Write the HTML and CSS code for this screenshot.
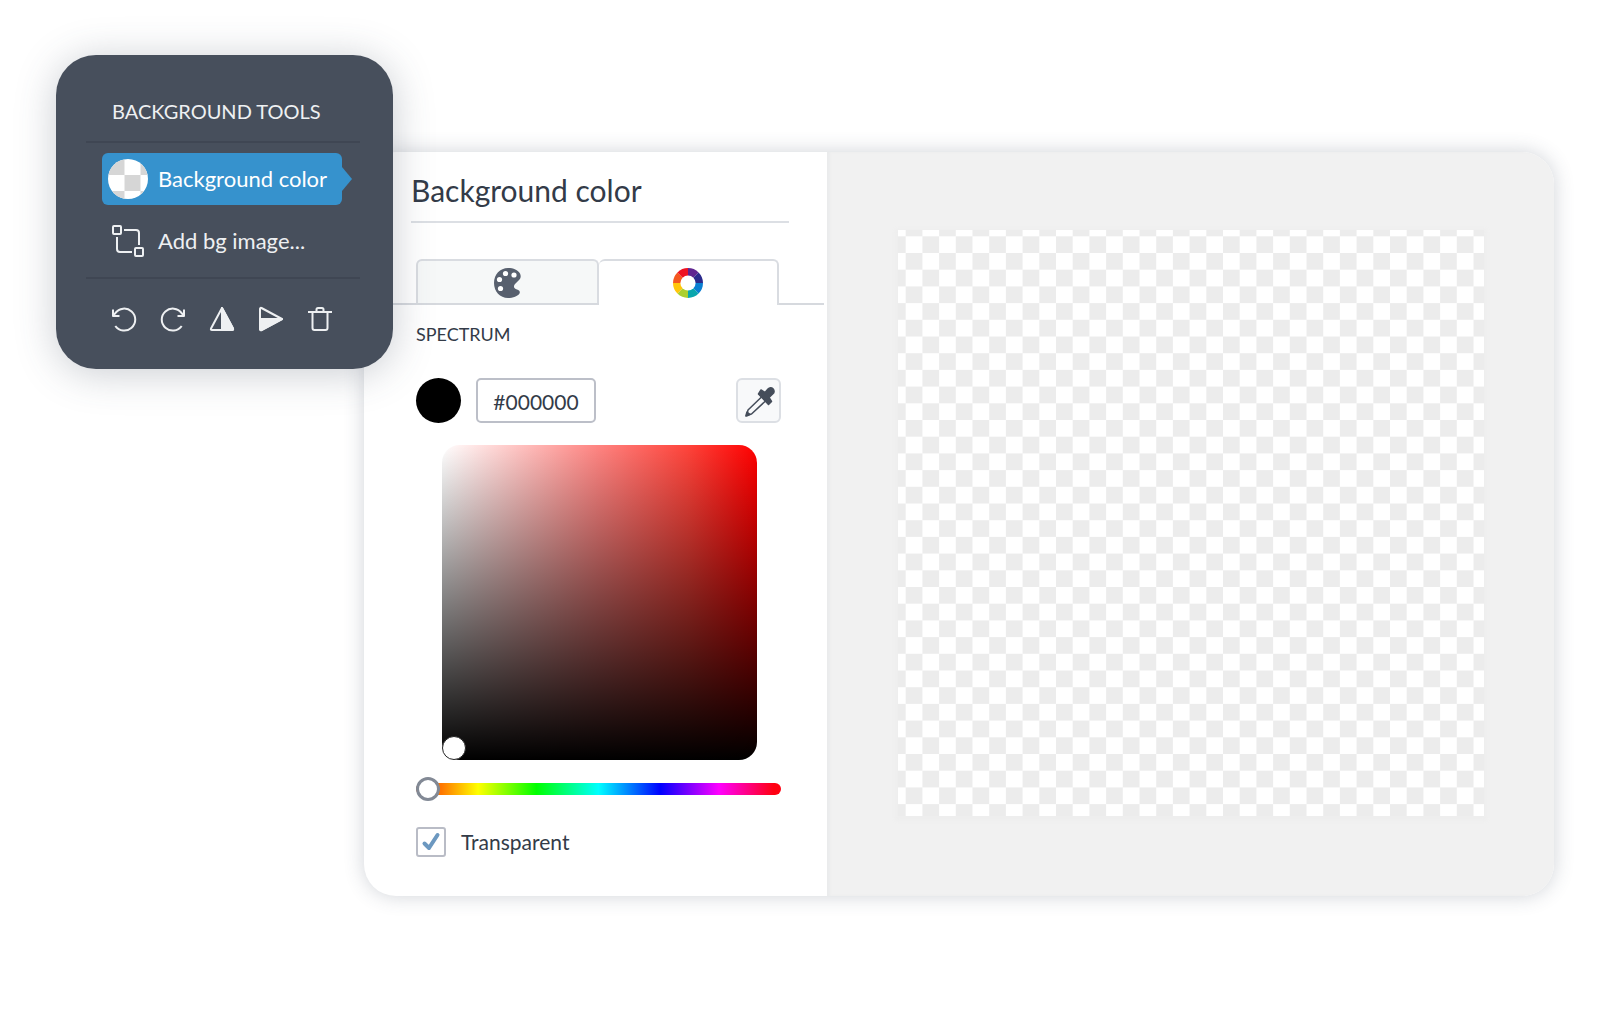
FILE: index.html
```html
<!DOCTYPE html>
<html lang="en">
<head>
    <meta charset="UTF-8">
    <meta name="viewport" content="width=device-width, initial-scale=1.0">
    <title>Background color</title>
    <link rel="stylesheet" href="styles.css">
</head>
<body>
    <main class="stage">
        <div class="editor">
            <section class="settings">
                <h1 class="settings-title">Background color</h1>

                <div class="tabs" role="tablist">
                    <button class="tab" role="tab" aria-selected="false" aria-label="Palette">
                        <svg width="28" height="32" viewBox="0 0 28 32">
                            <path fill="#58606e" d="M15 1C7 1 1 7.500 1 16s6 15 14 15c5 0 10-2 11.500-4.500 1-2-.5-3.500-2.500-4-3-.8-4-3-2-5.500l4.500-4.500c1.500-1.500 1.500-4 .5-6C25 3 20.500 1 15 1z"/>
                            <g fill="#fff">
                                <circle cx="12.500" cy="6.500" r="2.600"/>
                                <circle cx="21" cy="8" r="2.600"/>
                                <circle cx="6.500" cy="12.500" r="2.600"/>
                                <circle cx="7.500" cy="21.500" r="2.600"/>
                            </g>
                        </svg>
                    </button>
                    <button class="tab active" role="tab" aria-selected="true" aria-label="Spectrum">
                        <svg width="32" height="32" viewBox="-16 -16 32 32">
                            <path fill="#5f2590" d="M0 0V-15A15 15 0 0 1 10.600-10.600z"/>
                            <path fill="#2b2a8c" d="M0 0L10.600-10.600A15 15 0 0 1 15 0z"/>
                            <path fill="#0a7fd2" d="M0 0H15A15 15 0 0 1 10.600 10.600z"/>
                            <path fill="#0aa6ad" d="M0 0L10.600 10.600A15 15 0 0 1 0 15z"/>
                            <path fill="#acd030" d="M0 0V15A15 15 0 0 1-10.600 10.600z"/>
                            <path fill="#ffc60a" d="M0 0L-10.600 10.600A15 15 0 0 1-15 0z"/>
                            <path fill="#f4581f" d="M0 0H-15A15 15 0 0 1-10.600-10.600z"/>
                            <path fill="#ee1222" d="M0 0L-10.600-10.600A15 15 0 0 1 0-15z"/>
                            <circle r="7.600" fill="#fff"/>
                        </svg>
                    </button>
                </div>

                <div class="spectrum">
                    <h2 class="spectrum-title">SPECTRUM</h2>

                    <div class="color-row">
                        <span class="swatch"></span>
                        <input class="hex-input" type="text" value="#000000" aria-label="Hex color">
                        <button class="picker-button" aria-label="Pick a color">
                            <svg width="31" height="31" viewBox="0 0 31 31">
                                <g fill="#454d5a" stroke="#454d5a" stroke-width="1.500" stroke-linejoin="round">
                                    <path d="M21 6.500l3-3.500c1.500-1.600 3.600-1.600 5-.2 1.500 1.500 1.400 3.700-.1 5L25 11.500l2.500 4-3 3L14.500 8l2.500-4z"/>
                                    <path fill="none" d="M17.500 11L4 24l-1.200 5L7.500 28 21.500 15"/>
                                    <path d="M3 26l3 2.500-3.500 1.500H1.800z"/>
                                </g>
                            </svg>
                        </button>
                    </div>

                    <div class="color-area">
                        <span class="area-handle"></span>
                    </div>

                    <input class="hue-slider" type="range" min="0" max="360" value="0" aria-label="Hue">

                    <div class="check-row">
                        <input class="check" type="checkbox" id="transparent" checked>
                        <svg class="check-mark" width="30" height="30" viewBox="0 0 30 30">
                            <path fill="none" stroke="#6c98c0" stroke-width="4" stroke-linecap="round" stroke-linejoin="round" d="M8.500 16.500l4.500 4.500L21.500 8"/>
                        </svg>
                        <label for="transparent">Transparent</label>
                    </div>
                </div>
            </section>

            <section class="preview">
                <svg class="canvas" viewBox="0 0 586 586">
                    <defs>
                        <pattern id="checker" x="7.700" y="6.300" width="33.400" height="33.400" patternUnits="userSpaceOnUse">
                            <rect width="33.400" height="33.400" fill="#fff"/>
                            <rect x="16.700" width="16.700" height="16.700" fill="#ececec"/>
                            <rect y="16.700" width="16.700" height="16.700" fill="#ececec"/>
                        </pattern>
                    </defs>
                    <rect width="586" height="586" fill="url(#checker)"/>
                </svg>
            </section>
        </div>

        <aside class="tools">
            <h2 class="tools-title">BACKGROUND TOOLS</h2>
            <div class="tool-list">
                <button class="tool selected">
                    <svg width="40" height="40" viewBox="0 0 40 40">
                        <clipPath id="round"><circle cx="20" cy="20" r="20"/></clipPath>
                        <g clip-path="url(#round)">
                            <rect width="40" height="40" fill="#fff"/>
                            <path fill="#d6d6d6" d="M0 0h16.500v16H0zM32.500 0H40v16h-7.500zM16.500 16h16v16h-16zM0 32h16.500v8H0zM32.500 32H40v8h-7.500z"/>
                        </g>
                    </svg>
                    <span class="tool-name">Background color</span>
                </button>
                <button class="tool">
                    <svg width="40" height="40" viewBox="0 0 40 40" fill="none" stroke="#eef0f2" stroke-width="2">
                        <rect x="5" y="5" width="8" height="8" rx="1"/>
                        <rect x="27" y="27" width="8" height="8" rx="1"/>
                        <path d="M16 9h12q3 0 3 3v12M9 16v12q0 3 3 3h12"/>
                    </svg>
                    <span class="tool-name">Add bg image...</span>
                </button>
            </div>
            <div class="tool-actions">
                <button class="action" aria-label="Undo">
                    <svg width="24" height="24" viewBox="0 0 24 24">
                        <path d="M3.300 19A11 11 0 1 0 3.300 6.200L1 8.500M1 2.500v6.500h6.500"/>
                    </svg>
                </button>
                <button class="action" aria-label="Redo">
                    <svg width="24" height="24" viewBox="0 0 24 24">
                        <path d="M20.700 19A11 11 0 1 1 20.700 6.200L23 8.500M23 2.500v6.500h-6.500"/>
                    </svg>
                </button>
                <button class="action" aria-label="Flip horizontally">
                    <svg width="24" height="24" viewBox="0 0 24 24">
                        <path d="M12 1L1 21.500Q.5 23 2 23h20q1.500 0 1-1.500z"/>
                        <path class="solid" d="M12 1v22h10q1.500 0 1-1.500z"/>
                    </svg>
                </button>
                <button class="action" aria-label="Flip vertically">
                    <svg width="24" height="24" viewBox="0 0 24 24">
                        <path d="M23 12L2.500 1Q1 .5 1 2v20q0 1.500 1.500 1z"/>
                        <path class="solid" d="M23 12H1v10q0 1.500 1.500 1z"/>
                    </svg>
                </button>
                <button class="action" aria-label="Delete">
                    <svg width="24" height="24" viewBox="0 0 24 24">
                        <path d="M0 5h24M8.500 5V2.500q0-1.500 1.500-1.500h4q1.500 0 1.500 1.500V5M4.500 5v16q0 2 2 2h11q2 0 2-2V5"/>
                    </svg>
                </button>
            </div>
        </aside>
    </main>
</body>
</html>
```

FILE: styles.css
```css
* {
    box-sizing: border-box;
}
body {
    margin: 0;
    background: #fff;
    color: #333b48;
    font-family: Lato, "Liberation Sans", sans-serif;
    font-size: 22px;
}
h1, h2 {
    margin: 0;
    font-weight: 400;
}
button, input {
    margin: 0;
    padding: 0;
    border: none;
    background: none;
    color: inherit;
    font: inherit;
}
button {
    cursor: pointer;
}
svg {
    display: block;
}

/* page */
.stage {
    position: relative;
    padding: 152px 46px 114px 364px;
}
.editor {
    display: flex;
    border-radius: 32px;
    background: #fff;
    box-shadow: 0 0 20px rgba(60, 72, 90, 0.24);
    overflow: hidden;
}

/* settings column */
.settings {
    flex: 0 0 463px;
    padding: 18px 0 39px;
}
.settings-title {
    margin: 0 38px 0 47px;
    padding-bottom: 11px;
    border-bottom: 2px solid #dcdfe4;
    font-size: 30px;
    line-height: 40px;
}
.tabs {
    display: flex;
    margin: 36px 3px 0 0;
    padding: 0 45px 0 52px;
    border-bottom: 2px solid #d6d9de;
}
.tab {
    flex: 1;
    display: flex;
    align-items: center;
    justify-content: center;
    height: 44px;
    padding-top: 2px;
    border: 2px solid #d9dce1;
    border-bottom: none;
    border-radius: 6px 6px 0 0;
    background: #f6f8f8;
}
.tab.active {
    height: 46px;
    margin-bottom: -2px;
    padding-bottom: 2px;
    border-left: none;
    background: #fff;
}
.spectrum {
    padding: 17px 46px 0 52px;
}
.spectrum-title {
    font-size: 18px;
    line-height: 24px;
}
.color-row {
    display: flex;
    gap: 15px;
    margin-top: 32px;
}
.swatch {
    width: 45px;
    height: 45px;
    border-radius: 50%;
    background: #000;
}
.hex-input {
    width: 120px;
    height: 45px;
    padding-top: 2px;
    border: 2px solid #bcbfc8;
    border-radius: 5px;
    font-size: 21px;
    text-align: center;
}
.picker-button {
    display: flex;
    align-items: center;
    justify-content: center;
    width: 45px;
    height: 45px;
    margin-left: auto;
    padding: 2px 0 0 2px;
    border: 2px solid #dcdfe4;
    border-radius: 6px;
    background: #f8f9fa;
}
.color-area {
    position: relative;
    aspect-ratio: 1;
    margin: 22px 24px 0 26px;
    border-radius: 18px;
    background:
        linear-gradient(to bottom, transparent, #000),
        linear-gradient(to right, #fff 0%, #ff8380 50%, #ff443b 78%, #f00 100%);
}
.area-handle {
    position: absolute;
    left: 0;
    bottom: 0;
    width: 24px;
    height: 24px;
    border: 1px solid #222;
    border-radius: 50%;
    background: #fff;
}
.hue-slider {
    display: block;
    width: 100%;
    height: 24px;
    margin-top: 17px;
    appearance: none;
}
.hue-slider::-webkit-slider-runnable-track {
    height: 12px;
    border-radius: 6px;
    background: linear-gradient(to right, #f50 0%, #f70 7%, #ff0 17%, #0f0 33%, #0ff 50%, #00f 67%, #f0f 83%, #f01 98%);
}
.hue-slider::-webkit-slider-thumb {
    appearance: none;
    width: 24px;
    height: 24px;
    margin-top: -6px;
    border: 3px solid #828995;
    border-radius: 50%;
    background: #fff;
}
.check-row {
    position: relative;
    display: flex;
    align-items: center;
    gap: 15px;
    margin-top: 26px;
    font-size: 21px;
    line-height: 30px;
}
.check {
    appearance: none;
    width: 30px;
    height: 30px;
    border: 2px solid #b9bcc6;
    border-radius: 3px;
}
.check-mark {
    position: absolute;
    left: 0;
    top: 0;
    visibility: hidden;
    pointer-events: none;
}
.check:checked + .check-mark {
    visibility: visible;
}

/* preview */
.preview {
    flex: 1;
    padding: 78px 70px 80px 71px;
    background: #f1f1f1;
    box-shadow: inset 3px 0 2px #eaebec;
}
.canvas {
    width: 100%;
    box-shadow: 0 2px 4px 3px #eeeeee;
}

/* dark tool card */
.tools {
    position: absolute;
    left: 56px;
    top: 55px;
    width: 337px;
    padding: 43px 33px 38px 30px;
    border-radius: 40px;
    background: #474f5c;
    box-shadow: 0 4px 40px rgba(60, 72, 90, 0.28);
    color: #eef0f2;
}
.tools-title {
    padding: 0 0 17px 26px;
    border-bottom: 2px solid #3f4653;
    font-size: 20px;
    line-height: 26px;
}
.tool-list {
    display: flex;
    flex-direction: column;
    gap: 10px;
    padding: 10px 18px 10px 16px;
    border-bottom: 2px solid #3f4653;
}
.tool {
    position: relative;
    display: flex;
    align-items: center;
    gap: 10px;
    height: 52px;
    padding: 0 6px;
    border-radius: 6px;
    white-space: nowrap;
}
.tool-name {
    padding-bottom: 2px;
}
.tool.selected {
    background: #3692cd;
    color: #fff;
}
.tool.selected::after {
    content: "";
    position: absolute;
    left: 100%;
    top: 14px;
    border: 12px solid transparent;
    border-right-width: 0;
    border-left: 10px solid #3692cd;
}
.tool-actions {
    display: flex;
    justify-content: space-between;
    padding: 28px 28px 0 26px;
}
.action svg {
    fill: none;
    stroke: #eef0f2;
    stroke-width: 2;
    stroke-linejoin: round;
    overflow: visible;
}
.action .solid {
    fill: #eef0f2;
}
```
